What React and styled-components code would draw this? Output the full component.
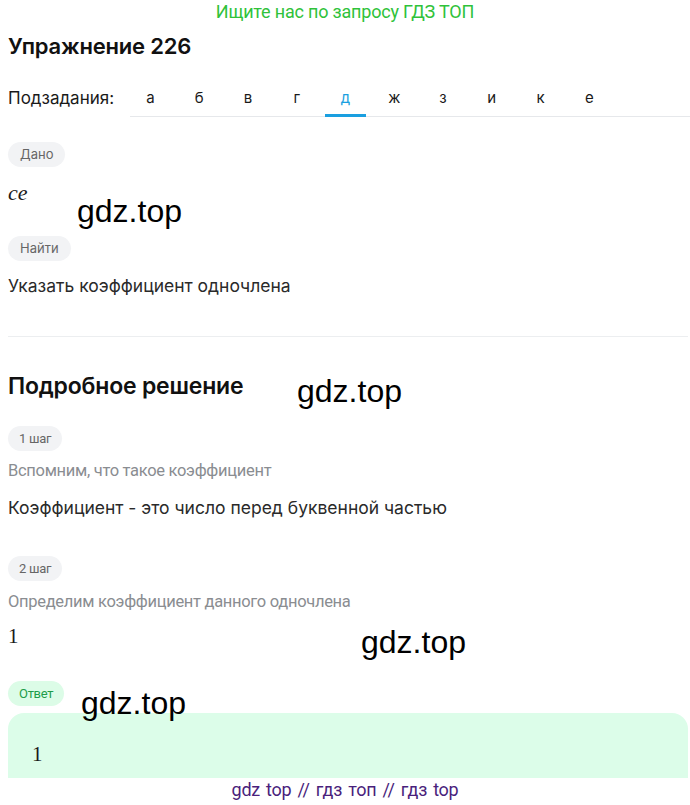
import React from 'react'
import styled, { createGlobalStyle } from 'styled-components'

const GlobalStyle = createGlobalStyle`
    html, body {
        margin: 0;
        padding: 0;
        background: #fff;
        font-family: Inter, Roboto, "Noto Sans", Arial, sans-serif;
        color: #1a1a1a;
    }
    body {
        overflow: hidden;
    }
`

const Page = styled.div`
    position: relative;
    width: 690px;
    height: 805px;
    overflow: hidden;
    padding: 0 8px;
    box-sizing: border-box;
`

const Banner = styled.div`
    text-align: center;
    color: #2fc23a;
    font-family: Roboto, sans-serif;
    font-size: 18px;
    line-height: 22px;
    padding-top: 1px;
    letter-spacing: -0.2px;
`

const Title = styled.h1`
    margin: 11px 0 0;
    font-size: 22px;
    line-height: 24px;
    font-weight: 600;
    color: #111;
    letter-spacing: -0.2px;
`

const SubtaskRow = styled.div`
    display: flex;
    align-items: stretch;
    margin-top: 27px;
`

const SubtaskLabel = styled.div`
    width: 122px;
    font-size: 17px;
    line-height: 20px;
    padding-top: 3px;
    color: #1a1a1a;
`

const Tabs = styled.div`
    flex: 1;
    display: flex;
    gap: 7.75px;
    border-bottom: 1px solid #e6e8eb;
    margin-right: -8px;
`

const Tab = styled.div`
    width: 41px;
    height: 32px;
    box-sizing: border-box;
    padding-top: 3px;
    text-align: center;
    font-size: 15px;
    line-height: 20px;
    color: ${({ active }) => (active ? '#1a9fe0' : '#1a1a1a')};
    border-bottom: 3px solid ${({ active }) => (active ? '#1a9fe0' : 'transparent')};
    margin-bottom: -1px;
`

const Pill = styled.div`
    display: inline-block;
    height: 25px;
    line-height: 25px;
    padding: 0 ${({ tight }) => (tight ? '11px' : '12px')};
    border-radius: 13px;
    font-size: 13px;
    background: ${({ green }) => (green ? '#dcfce7' : '#f2f3f5')};
    color: ${({ green }) => (green ? '#1f9d4a' : '#666')};
    font-family: ${({ tight }) => (tight ? 'Roboto, sans-serif' : 'inherit')};
    letter-spacing: ${({ tight }) => (tight ? '-0.3px' : '0')};
`

const Block = styled.div`
    margin-top: ${({ mt }) => mt || 0}px;
`

const MathText = styled.div`
    font-family: "Liberation Serif", "DejaVu Serif", serif;
    font-size: ${({ big }) => (big ? 22 : 21)}px;
    line-height: 22px;
    font-style: ${({ italic }) => (italic ? 'italic' : 'normal')};
    color: #1a1a1a;
`

const BodyText = styled.div`
    font-size: 17.5px;
    line-height: 22px;
    color: #2a2a2a;
`

const Hint = styled.div`
    font-family: Roboto, sans-serif;
    font-size: 16.5px;
    line-height: 20px;
    color: #8a8d91;
    letter-spacing: -0.3px;
`

const Divider = styled.hr`
    border: 0;
    border-top: 1px solid #eceef0;
    margin: 39px 0 0;
    margin-right: -6px;
`

const SectionTitle = styled.h2`
    margin: 37px 0 0;
    font-size: 23px;
    line-height: 24px;
    font-weight: 600;
    color: #111;
    letter-spacing: -0.2px;
`

const AnswerBox = styled.div`
    margin-top: 7px;
    margin-right: -6px;
    height: 90px;
    border-radius: 16px;
    background: #dcfde9;
    padding: 30px 24px;
    box-sizing: border-box;
`

const Watermark = styled.div`
    position: absolute;
    left: ${({ x }) => x}px;
    top: ${({ y }) => y}px;
    font-family: "Liberation Sans", Arial, sans-serif;
    font-size: 32px;
    line-height: 36px;
    color: #000;
    pointer-events: none;
`

const Footer = styled.div`
    position: absolute;
    left: 0;
    right: 0;
    bottom: 0;
    height: 27px;
    background: #fff;
    text-align: center;
    color: #4a1f7c;
    font-family: Roboto, sans-serif;
    font-size: 18px;
    line-height: 24px;
    letter-spacing: -0.3px;
    word-spacing: 2px;
`

const tabs = ['а', 'б', 'в', 'г', 'д', 'ж', 'з', 'и', 'к', 'е']

const App = () => {
    return (
        <Page>
            <GlobalStyle />
            <Banner>Ищите нас по запросу ГДЗ ТОП</Banner>
            <Title>Упражнение 226</Title>

            <SubtaskRow>
                <SubtaskLabel>Подзадания:</SubtaskLabel>
                <Tabs>
                    {tabs.map((t) => (
                        <Tab key={t} active={t === 'д'}>
                            {t}
                        </Tab>
                    ))}
                </Tabs>
            </SubtaskRow>

            <Block mt={25}>
                <Pill>Дано</Pill>
            </Block>
            <Block mt={15}>
                <MathText italic big>ce</MathText>
            </Block>
            <Block mt={32}>
                <Pill>Найти</Pill>
            </Block>
            <Block mt={14}>
                <BodyText>Указать коэффициент одночлена</BodyText>
            </Block>

            <Divider />

            <SectionTitle>Подробное решение</SectionTitle>

            <Block mt={28}>
                <Pill tight>1 шаг</Pill>
            </Block>
            <Block mt={10}>
                <Hint>Вспомним, что такое коэффициент</Hint>
            </Block>
            <Block mt={16}>
                <BodyText>Коэффициент - это число перед буквенной частью</BodyText>
            </Block>

            <Block mt={37}>
                <Pill tight>2 шаг</Pill>
            </Block>
            <Block mt={11}>
                <Hint>Определим коэффициент данного одночлена</Hint>
            </Block>
            <Block mt={13}>
                <MathText>1</MathText>
            </Block>

            <Block mt={34}>
                <Pill green tight>Ответ</Pill>
            </Block>
            <AnswerBox>
                <MathText>1</MathText>
            </AnswerBox>

            <Watermark x={77} y={193}>gdz.top</Watermark>
            <Watermark x={297} y={373}>gdz.top</Watermark>
            <Watermark x={361} y={624}>gdz.top</Watermark>
            <Watermark x={81} y={685}>gdz.top</Watermark>

            <Footer>gdz top // гдз топ // гдз top</Footer>
        </Page>
    )
}

export default App
